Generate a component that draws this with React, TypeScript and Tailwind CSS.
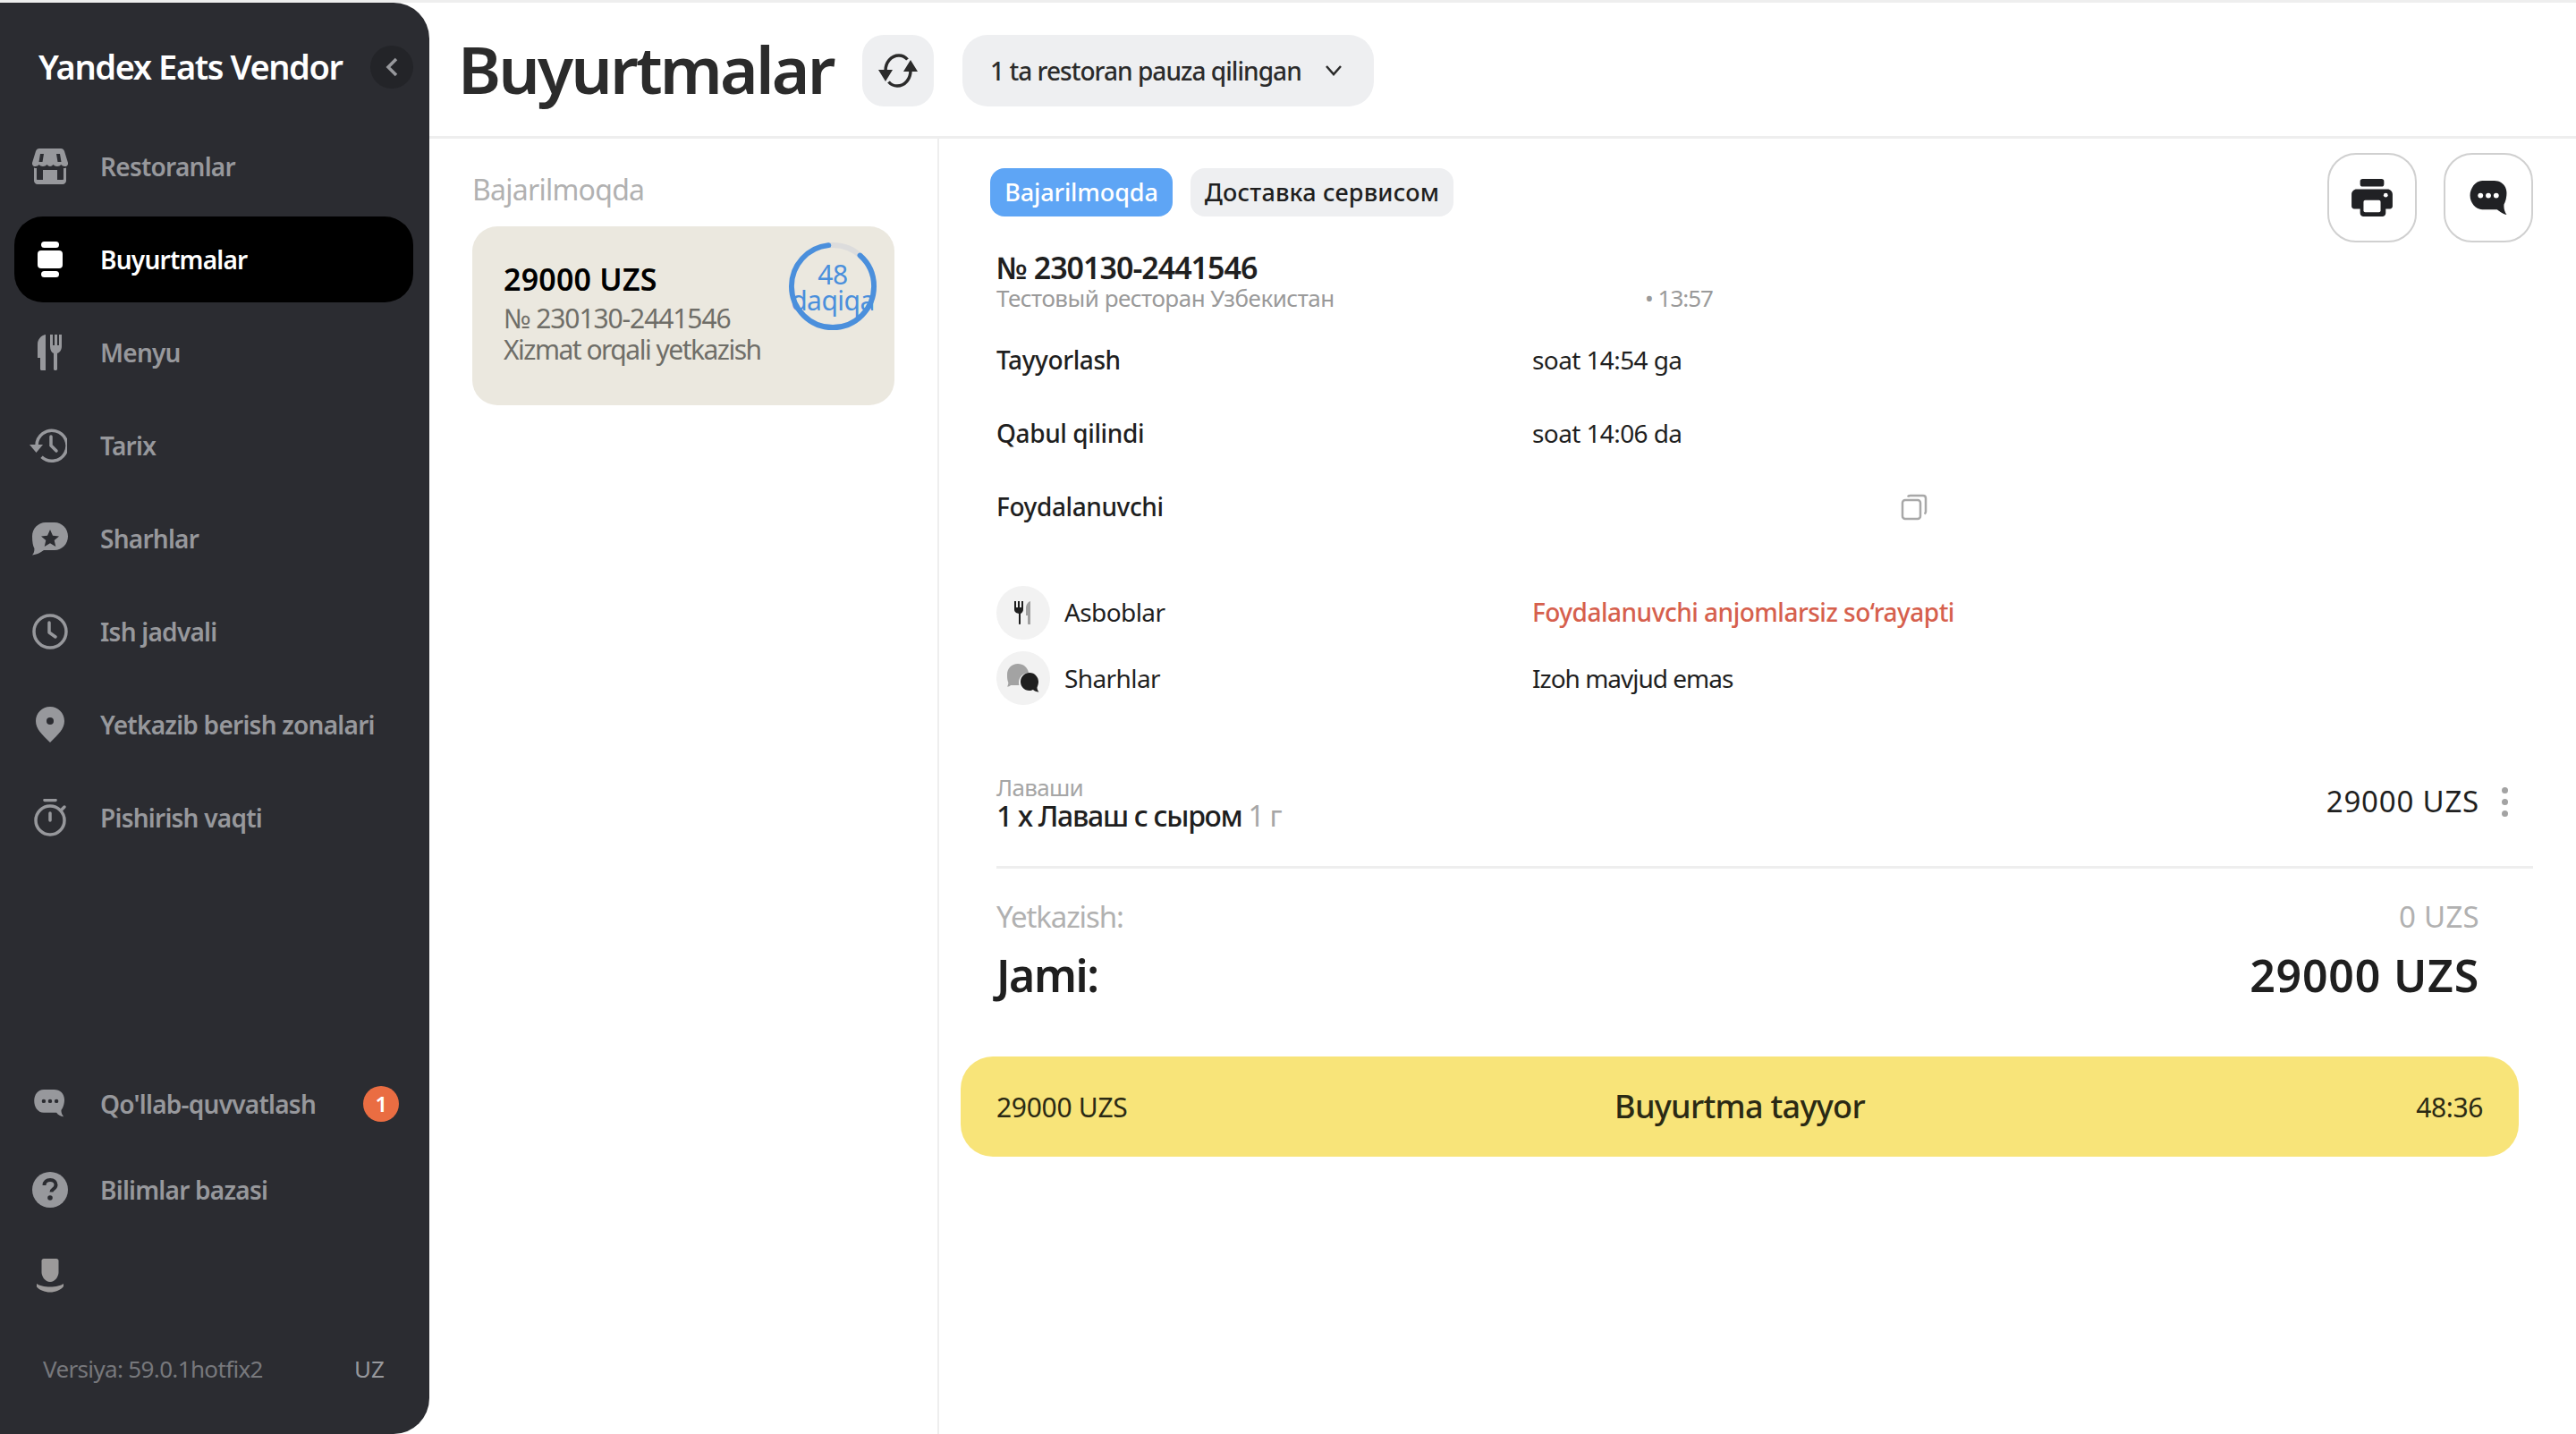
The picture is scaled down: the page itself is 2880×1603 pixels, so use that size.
import React from "react";

type IconProps = { className?: string };

const StoreIcon = ({ className }: IconProps) => (
  <svg viewBox="0 0 40 40" className={className} fill="currentColor">
    <path d="M8 0h24c2 0 3.300 1 4 3l4 13c.4 2.500-1.300 4-3.500 4-1.800 0-3.200-.7-4.200-2-1 1.300-2.400 2-4.300 2s-3.400-.7-4.500-2c-1 1.300-2.300 2-3.500 2s-2.500-.7-3.500-2c-1.100 1.300-2.600 2-4.500 2s-3.300-.7-4.300-2c-1 1.300-2.400 2-4.200 2C1.300 20-.4 18.500 0 16L4 3c.7-2 2-3 4-3Z" />
    <path d="M9 6h4l-1.500 9H7.500ZM27 6h4l1.500 9h-4Z" fill="#2b2c31" />
    <path d="M2 21.500c1 .4 2 .5 3 .5v12c0 .6.400 1 1 1h6V24h16v11h6c.6 0 1-.4 1-1V22c1 0 2-.1 3-.5V36c0 2.200-1.800 4-4 4H6c-2.200 0-4-1.800-4-4Z" />
    <path d="M14 35h12v-6H14Zm3-8h7v4h-7Z" fillRule="evenodd" />
  </svg>
);
const OrdersIcon = ({ className }: IconProps) => (
  <svg viewBox="0 0 40 40" className={className} fill="currentColor">
    <rect x="10" y="0" width="20" height="7" rx="3.500" />
    <rect x="6" y="10" width="28" height="20" rx="4" />
    <rect x="10" y="33" width="20" height="7" rx="3.500" />
  </svg>
);
const CutleryIcon = ({ className }: IconProps) => (
  <svg viewBox="0 0 40 40" className={className} fill="currentColor">
    <path d="M15 0v40h-4.500c-.8 0-1.500-.7-1.500-1.500V26H6V11C6 5 10 1 15 0Z" />
    <path d="M19 0h3v12h2V0h3v12h2V0h3v13c0 4-2 7-5 8v17.500c0 .8-.7 1.500-1.500 1.500h-1c-.8 0-1.500-.7-1.500-1.500V21c-2.500-1-4-4-4-8Z" transform="translate(1 0)" />
  </svg>
);
const HistoryIcon = ({ className }: IconProps) => (
  <svg viewBox="0 0 42 40" className={className} fill="none" stroke="currentColor" strokeWidth="3.500">
    <path d="M8 20a17 17 0 1 1 5.500 12.800" />
    <path d="M0 19h15l-7.500 9Z" fill="currentColor" stroke="none" />
    <path d="M24 10v10l6 6" strokeLinecap="round" />
  </svg>
);
const ReviewIcon = ({ className }: IconProps) => (
  <svg viewBox="0 0 40 37" className={className}>
    <path d="M15 0h10c8.300 0 15 7 15 15.500S33.300 31 25 31H13C9 34 5 36 0 36.500c1.800-2 2.600-4.500 2.400-7.500C.9 26.500 0 22 0 15.500 0 7 6.700 0 15 0Z" fill="currentColor" />
    <path d="m20 8 3 6.700 7 .7-5.300 4.700 1.600 7L20 23.300l-6.300 3.800 1.600-7L10 15.400l7-.7Z" fill="#2b2c31" />
  </svg>
);
const ClockIcon = ({ className }: IconProps) => (
  <svg viewBox="0 0 40 40" className={className} fill="none" stroke="currentColor" strokeWidth="3.500">
    <circle cx="20" cy="20" r="18" />
    <path d="M19 10v11l7 5" strokeLinecap="round" strokeLinejoin="round" />
  </svg>
);
const PinIcon = ({ className }: IconProps) => (
  <svg viewBox="0 0 40 40" className={className}>
    <path d="M20 40C11 31 4 25 4 16 4 7 11 0 20 0s16 7 16 16c0 9-7 15-16 24Z" fill="currentColor" />
    <circle cx="20" cy="16" r="4" fill="#2b2c31" />
  </svg>
);
const TimerIcon = ({ className }: IconProps) => (
  <svg viewBox="0 0 40 42" className={className} fill="none" stroke="currentColor">
    <circle cx="20" cy="24" r="16" strokeWidth="3.500" />
    <path d="M14 1.500h12" strokeWidth="3.500" strokeLinecap="round" />
    <path d="M20 16v8M33 12l3-3" strokeWidth="3.500" strokeLinecap="round" />
  </svg>
);
const SupportIcon = ({ className }: IconProps) => (
  <svg viewBox="0 0 40 36" className={className}>
    <path d="M13 2h13c7.500 0 13 5 13 13s-4 13-4 13c0 3 1 6 3 8-4-.5-7-2-9-5H13C5.500 31 1 23.500 1 16S5.500 2 13 2Z" transform="translate(-1 -2)" fill="currentColor" />
    <circle cx="12" cy="14.500" r="2.500" fill="#2b2c31" />
    <circle cx="20" cy="14.500" r="2.500" fill="#2b2c31" />
    <circle cx="28" cy="14.500" r="2.500" fill="#2b2c31" />
  </svg>
);
const HelpIcon = ({ className }: IconProps) => (
  <svg viewBox="0 0 40 40" className={className}>
    <circle cx="20" cy="20" r="20" fill="currentColor" />
    <path d="M13.500 15c0-3.800 2.800-6 6.700-6 3.700 0 6.300 2.200 6.300 5.500 0 2.300-1.200 3.600-3 4.800-1.500 1-2 1.700-2 3.200" fill="none" stroke="#2b2c31" strokeWidth="4" />
    <circle cx="20" cy="29" r="2.800" fill="#2b2c31" />
  </svg>
);
const ProfileIcon = ({ className }: IconProps) => (
  <svg viewBox="0 0 32 38" className={className} fill="#9c9a9a">
    <path d="M9 0h14c1.500 0 2.500 1 2.500 2.500V15c0 5-4 11-9.500 11S6.500 20 6.500 15V2.500C6.500 1 7.500 0 9 0Z" />
    <path d="M1 28c3 2 8.500 3.500 15 3.500S28 30 31 28v3c-3 4-9 6.500-15 6.500S4 35 1 31.500Z" />
  </svg>
);
const RefreshIcon = ({ className }: IconProps) => (
  <svg viewBox="0 0 48 40" className={className} fill="none" stroke="#2b2b2b" strokeWidth="3.500">
    <path d="M10 20C10 11 16 3 25 3c4 0 7 1.500 9.500 4.500" />
    <path d="M38 20c0 9-6 17-15 17-4 0-7-1.500-9.500-4.500" />
    <path d="M38 8l8 13H30ZM10 32 2 19h16Z" fill="#2b2b2b" stroke="none" />
  </svg>
);
const ChevronDown = ({ className }: IconProps) => (
  <svg viewBox="0 0 20 14" className={className} fill="none" stroke="#2b2b2b" strokeWidth="2.500">
    <path d="m2 2 8 9 8-9" />
  </svg>
);
const PrintIcon = ({ className }: IconProps) => (
  <svg viewBox="0 0 48 44" className={className}>
    <rect x="10" y="0" width="28" height="9" rx="3" fill="#202124" />
    <path d="M6 12h36c3.300 0 6 2.700 6 6v14c0 1.700-1.300 3-3 3h-5v5c0 2.200-1.800 4-4 4H14c-2.200 0-4-1.800-4-4v-5H3c-1.700 0-3-1.300-3-3V18c0-3.300 2.700-6 6-6Z" fill="#202124" />
    <rect x="14" y="25" width="20" height="14" rx="2" fill="#fff" />
    <circle cx="40" cy="19" r="2.500" fill="#fff" />
  </svg>
);
const ChatIcon = ({ className }: IconProps) => (
  <svg viewBox="0 0 42 39" className={className}>
    <path d="M14 0h14c8 0 14 6 14 14s-3 13-3 13c-.5 4 .3 8 3 12-4-1-8-3.500-11-6H14C6 33 0 25 0 17S6 0 14 0Z" fill="#202124" />
    <circle cx="12" cy="17" r="3" fill="#fff" />
    <circle cx="21" cy="17" r="3" fill="#fff" />
    <circle cx="30" cy="17" r="3" fill="#fff" />
  </svg>
);
const CopyIcon = ({ className }: IconProps) => (
  <svg viewBox="0 0 30 30" className={className} fill="none" stroke="#a8a8a8" strokeWidth="2.500">
    <rect x="2" y="7" width="20" height="21" rx="3" />
    <path d="M8 3.500c.4-1 1.200-1.500 2.500-1.500H25c1.700 0 3 1.300 3 3v15c0 1-.5 2-1.500 2.500" />
  </svg>
);
const SmallCutlery = ({ className }: IconProps) => (
  <svg viewBox="0 0 20 26" className={className}>
    <path d="M0 0h2v7h2V0h2v7h2V0h2v9c0 2.500-1.200 4-3 5v11c0 .6-.4 1-1 1s-1-.4-1-1V14C1.200 13 0 11.500 0 9Z" fill="#1f1f1f" />
    <path d="M18 0v26h-2c-.6 0-1-.4-1-1V16h-2V8c0-4 2-7 5-8Z" fill="#a0a0a0" />
  </svg>
);
const SmallBubbles = ({ className }: IconProps) => (
  <svg viewBox="0 0 36 32" className={className}>
    <path d="M12 0c6 0 11 4 12 10-6 0-11 5-11 11 0 1 .1 2 .4 3H4c-1 1-2.500 1.500-4 1.500C1 24 1.300 22.500 1.300 21 0 18 0 15 0 12 0 5 5 0 12 0Z" fill="#a3a3a3" />
    <path d="M25 10c6 0 10 5 10 10 0 3-1 5-1.500 6.500 0 2 .7 3.500 2 5-3 0-5-1-6.500-2.500-1 .5-2.500 1-4 1-6 0-10-4.500-10-10s4.500-10 10-10Z" fill="#1f1f1f" />
  </svg>
);

const navItems = [
  { label: "Restoranlar", Icon: StoreIcon, icon: "w-10 h-10" },
  { label: "Buyurtmalar", Icon: OrdersIcon, icon: "w-10 h-10", active: true },
  { label: "Menyu", Icon: CutleryIcon, icon: "w-10 h-10" },
  { label: "Tarix", Icon: HistoryIcon, icon: "w-[42px] h-10 -ml-1" },
  { label: "Sharhlar", Icon: ReviewIcon, icon: "w-10 h-[37px]" },
  { label: "Ish jadvali", Icon: ClockIcon, icon: "w-10 h-10" },
  { label: "Yetkazib berish zonalari", Icon: PinIcon, icon: "w-10 h-10" },
  { label: "Pishirish vaqti", Icon: TimerIcon, icon: "w-10 h-[42px]" },
];

function NavRow({ label, Icon, icon, active, badge }: { label?: string; Icon: React.FC<IconProps>; icon: string; active?: boolean; badge?: string }) {
  return (
    <div className={`flex h-24 items-center rounded-[32px] pl-4 text-[28px] font-semibold tracking-[-0.75px] ${active ? "bg-black text-white" : "text-[#97989c]"}`}>
      <span className="flex w-12 shrink-0 items-center justify-center">
        <Icon className={icon} />
      </span>
      {label && <span className="ml-8 whitespace-nowrap">{label}</span>}
      {badge && (
        <span className="ml-auto mr-[16px] flex h-10 w-10 items-center justify-center rounded-full bg-[#ea6d42] text-[24px] font-semibold text-white">
          {badge}
        </span>
      )}
    </div>
  );
}

function InfoRow({ label, value, action }: { label: string; value?: string; action?: React.ReactNode }) {
  return (
    <div className="flex h-[82px] items-center pl-10 text-[28px] text-[#1f1f1f]">
      <span className="w-[599px] shrink-0 font-medium tracking-[-0.4px]">{label}</span>
      {value && <span className="tracking-[-0.6px]">{value}</span>}
      {action}
    </div>
  );
}

export default function App() {
  return (
    <div
      className="flex h-[1603px] w-[2880px] overflow-hidden border-t-[3px] border-[#eeeeee] bg-white"
      style={{ fontFamily: '"Noto Sans", "Open Sans", sans-serif' }}
    >
      <aside className="flex h-full w-[480px] shrink-0 flex-col rounded-r-[40px] bg-[#2b2c31] pl-4 pr-[18px]">
        <div className="flex h-[135px] shrink-0 items-center pl-[27px] pt-2">
          <span className="whitespace-nowrap text-[38px] font-semibold tracking-[-1.4px] text-white">Yandex Eats Vendor</span>
          <span className="ml-auto flex h-12 w-12 items-center justify-center rounded-full bg-[#232428]">
            <svg viewBox="0 0 14 22" className="h-[22px] w-[14px]" fill="none" stroke="#97989c" strokeWidth="3.500">
              <path d="M12 2 3 11l9 9" />
            </svg>
          </span>
        </div>
        <nav className="flex flex-col gap-2">
          {navItems.map((n) => (
            <NavRow key={n.label} {...n} />
          ))}
        </nav>
        <div className="mt-auto flex flex-col pb-[53px]">
          <NavRow label="Qo'llab-quvvatlash" Icon={SupportIcon} icon="w-9 h-8" badge="1" />
          <NavRow label="Bilimlar bazasi" Icon={HelpIcon} icon="w-10 h-10" />
          <NavRow Icon={ProfileIcon} icon="w-8 h-[38px]" />
          <div className="mt-9 flex h-10 items-center justify-between pl-8 pr-8 text-[26px]">
            <span className="tracking-[-0.65px] text-[#77787c]">Versiya: 59.0.1hotfix2</span>
            <span className="text-[#97989c]">UZ</span>
          </div>
        </div>
      </aside>

      <main className="flex min-w-0 flex-1 flex-col">
        <header className="flex h-[152px] shrink-0 items-center border-b-[3px] border-[#eeeeee] pl-8 pt-[2px]">
          <h1 className="-mt-[4px] w-[419px] shrink-0 whitespace-nowrap text-[73px] font-semibold tracking-[-2.8px] text-[#2b2b2b]">Buyurtmalar</h1>
          <button className="ml-[33px] flex h-20 w-20 items-center justify-center rounded-[24px] bg-[#eeeff1]">
            <RefreshIcon className="h-10 w-12" />
          </button>
          <button className="ml-8 flex h-20 w-[460px] items-center rounded-[28px] bg-[#eeeff1] pl-[31px] text-[28px] font-medium tracking-[-0.95px] text-[#2b2b2b]">
            <span className="whitespace-nowrap">1 ta restoran pauza qilingan</span>
            <ChevronDown className="ml-[26px] h-[14px] w-5" />
          </button>
        </header>

        <div className="flex min-h-0 flex-1">
          <section className="w-[570px] shrink-0 border-r-2 border-[#eeeeee] pl-12">
            <div className="mt-[37px] h-10 text-[32px] leading-10 tracking-[-0.75px] text-[#b1b1b1]">Bajarilmoqda</div>
            <div className="relative mt-[21px] h-[200px] w-[472px] rounded-[28px] bg-[#ebe8df] pl-[35px] pt-[39px]">
              <div className="text-[34px] font-semibold leading-10 tracking-[0.2px] text-black">29000 UZS</div>
              <div className="mt-[4px] text-[30px] leading-10 tracking-[-1.1px] text-[#6f6e68]">№ 230130-2441546</div>
              <div className="-mt-[5px] text-[30px] leading-10 tracking-[-1.5px] text-[#6f6e68]">Xizmat orqali yetkazish</div>
              <div className="absolute left-[349px] top-[16px] flex h-[104px] w-[108px] flex-col items-center justify-center text-[30px] leading-[29px] tracking-[-0.5px] text-[#4a8fdc]">
                <svg viewBox="0 0 100 100" className="absolute left-[5px] top-[2px] h-[98px] w-[98px] -rotate-90">
                  <circle cx="50" cy="50" r="47" fill="none" stroke="#dcdcdc" strokeWidth="6" />
                  <circle cx="50" cy="50" r="47" fill="none" stroke="#4a8fdc" strokeWidth="6" strokeLinecap="round" strokeDasharray="256 295" strokeDashoffset="-34" />
                </svg>
                <span className="relative">48</span>
                <span className="relative">daqiqa</span>
              </div>
            </div>
          </section>

          <section className="min-w-0 flex-1 pl-6 pr-12">
            <div className="flex h-[116px] items-start justify-between pl-[33px] pt-4">
              <div className="mt-[17px] flex gap-5 text-[27px] font-medium">
                <span className="flex h-[54px] w-[204px] items-center justify-center rounded-[16px] bg-[#5ea5f5] tracking-[-0.1px] text-white">Bajarilmoqda</span>
                <span className="flex h-[54px] w-[294px] items-center justify-center rounded-[16px] bg-[#eeeff1] tracking-[0.2px] text-[#1f1f1f]">Доставка сервисом</span>
              </div>
              <div className="flex gap-[30px]">
                <button className="flex h-[100px] w-[100px] items-center justify-center rounded-[32px] border-2 border-[#d0d0d0]">
                  <PrintIcon className="h-[42px] w-[46px]" />
                </button>
                <button className="flex h-[100px] w-[100px] items-center justify-center rounded-[32px] border-2 border-[#d0d0d0]">
                  <ChatIcon className="h-[38px] w-[42px]" />
                </button>
              </div>
            </div>

            <div className="mt-[8px] pl-10 text-[34px] font-semibold leading-10 tracking-[-1px] text-[#1f1f1f]">№ 230130-2441546</div>
            <div className="flex h-7 items-center pl-10 text-[26px] tracking-[-0.5px] text-[#9a9a9a]">
              <span className="w-[725px] shrink-0 whitespace-nowrap">Тестовый ресторан Узбекистан</span>
              <span className="tracking-[-1px]">• 13:57</span>
            </div>

            <div className="mt-[14px]">
              <InfoRow label="Tayyorlash" value="soat 14:54 ga" />
              <InfoRow label="Qabul qilindi" value="soat 14:06 da" />
              <InfoRow
                label="Foydalanuvchi"
                action={<CopyIcon className="ml-[412px] mt-[2px] h-[30px] w-[30px]" />}
              />
            </div>

            <div className="mt-[48px] flex h-[60px] items-center pl-10 text-[28px] tracking-[-0.6px] text-[#1f1f1f]">
              <span className="flex h-[60px] w-[60px] items-center justify-center rounded-full bg-[#f2f2f2]">
                <SmallCutlery className="h-[26px] w-5" />
              </span>
              <span className="ml-4 w-[523px] shrink-0 pb-[2px]">Asboblar</span>
              <span className="whitespace-nowrap pb-[2px] font-medium tracking-[-0.5px] text-[#d6604d]">Foydalanuvchi anjomlarsiz so‘rayapti</span>
            </div>
            <div className="mt-[13px] flex h-[60px] items-center pl-10 text-[28px] tracking-[-0.6px] text-[#1f1f1f]">
              <span className="flex h-[60px] w-[60px] items-center justify-center rounded-full bg-[#f2f2f2]">
                <SmallBubbles className="h-8 w-9" />
              </span>
              <span className="ml-4 w-[523px] shrink-0">Sharhlar</span>
              <span className="tracking-[-1px]">Izoh mavjud emas</span>
            </div>

            <div className="mt-[76px] flex items-center pl-10 pr-[25px]">
              <div className="flex-1">
                <div className="text-[26px] leading-8 tracking-[-0.7px] text-[#a6a6a6]">Лаваши</div>
                <div className="text-[32px] font-medium leading-8 tracking-[-1.3px] text-[#1f1f1f]">
                  1 х Лаваш с сыром <span className="font-normal text-[#a6a6a6]">1 г</span>
                </div>
              </div>
              <span className="text-[33px] tracking-[0.8px] text-[#1f1f1f]">29000 UZS</span>
              <span className="ml-[25px] flex w-[10px] flex-col gap-[6px]">
                <i className="h-[7px] w-[7px] rounded-full bg-[#a3a3a3]" />
                <i className="h-[7px] w-[7px] rounded-full bg-[#a3a3a3]" />
                <i className="h-[7px] w-[7px] rounded-full bg-[#a3a3a3]" />
              </span>
            </div>

            <div className="ml-10 mt-[40px] h-[3px] bg-[#eeeeee]" />

            <div className="mt-[34px] flex h-10 items-center justify-between pl-10 pr-[60px] text-[33px] text-[#b1b1b1]">
              <span className="tracking-[-1.1px]">Yetkazish:</span>
              <span className="tracking-[0.3px]">0 UZS</span>
            </div>
            <div className="mt-[15px] flex h-[60px] items-center justify-between pl-10 pr-[60px] text-[50px] font-semibold text-[#1f1f1f]">
              <span className="tracking-[-1.4px]">Jami:</span>
              <span className="tracking-[0.8px]">29000 UZS</span>
            </div>

            <button className="relative mt-[61px] flex h-[112px] w-[1742px] items-center justify-between rounded-[36px] bg-[#f8e479] pl-10 pr-10 text-[30px] tracking-[-0.3px] text-[#2b2a14]">
              <span>29000 UZS</span>
              <span className="absolute inset-x-0 text-center text-[36px] font-medium tracking-[-0.7px]">Buyurtma tayyor</span>
              <span className="tracking-[-0.4px]">48:36</span>
            </button>
          </section>
        </div>
      </main>
    </div>
  );
}
